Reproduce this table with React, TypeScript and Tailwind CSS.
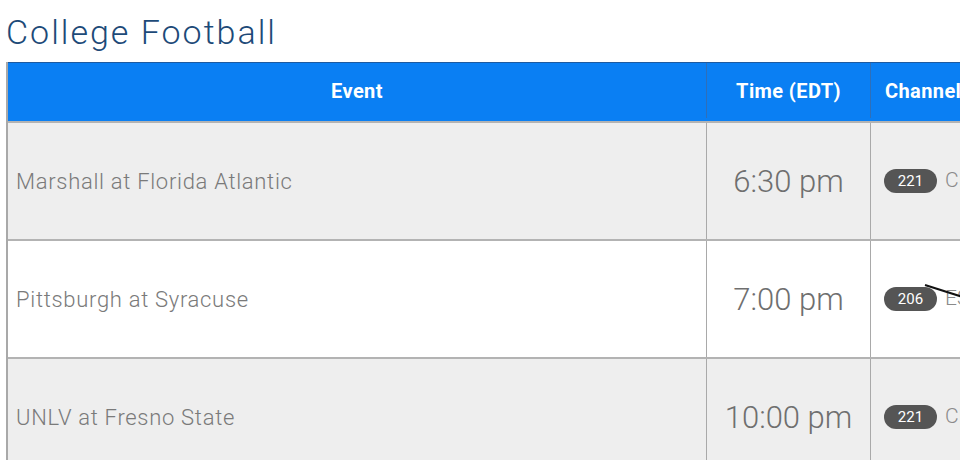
import React from 'react'

type Row = { event: string; time: string; channel: string; label: string; shade: boolean }

const rows: Row[] = [
  { event: 'Marshall at Florida Atlantic', time: '6:30 pm', channel: '221', label: 'CBSSN', shade: true },
  { event: 'Pittsburgh at Syracuse', time: '7:00 pm', channel: '206', label: 'ESPN', shade: false },
  { event: 'UNLV at Fresno State', time: '10:00 pm', channel: '221', label: 'CBSSN', shade: true },
]

const font = { fontFamily: 'Roboto, "Open Sans", sans-serif' }

export default function App() {
  return (
    <div className="w-[960px] h-[460px] overflow-hidden bg-white" style={font}>
      {/* ── Title ── */}
      <h1 className="h-[62px] pl-[6px] pt-[12px] text-[34px] leading-[40px] font-light tracking-[2px] text-[#1d4a78]">
        College Football
      </h1>

      {/* ── Schedule table ── */}
      <div className="w-[1120px] ml-[6px] border-l-2 border-[#a9a9a9]">
        {/* Header */}
        <div className="flex h-[59px] pb-[3px] bg-[#0a7ff3] border-t border-[#1d5aa0] text-white text-[20px] tracking-[0.4px] font-bold">
          <div className="w-[699px] flex items-center justify-center border-r border-[#2f6fb8]">Event</div>
          <div className="w-[164px] flex items-center justify-center border-r border-[#2f6fb8]">Time (EDT)</div>
          <div className="flex-1 flex items-center pl-[14px]">Channel</div>
        </div>

        {/* Rows */}
        {rows.map((r, i) => (
          <div
            key={i}
            className={`relative flex h-[118px] border-t-2 first:border-t-0 border-[#b3b3b3] ${r.shade ? 'bg-[#eeeeee]' : 'bg-white'}`}
          >
            <div className="w-[699px] flex items-center pl-[8px] text-[22px] font-light tracking-[0.7px] text-[#7a7a7a] border-r border-[#a9a9a9]">
              {r.event}
            </div>
            <div className="w-[164px] flex items-center justify-center pt-[2px] text-[31px] font-light text-[#6f6f6f] border-r border-[#a9a9a9]">
              {r.time}
            </div>
            <div className="flex-1 flex items-center pl-[13px] gap-[8px]">
              <span className="inline-flex items-center justify-center w-[53px] h-[24px] rounded-full bg-[#555555] text-white text-[15px] leading-none">
                {r.channel}
              </span>
              <span className="text-[21px] font-light text-[#8a8a8a]">{r.label}</span>
            </div>
            {i === 1 && (
              <svg className="absolute left-[916px] top-[42px]" width="50" height="20" viewBox="0 0 50 20">
                <path d="M1 2 L48 17" stroke="#111" strokeWidth="2" fill="none" />
              </svg>
            )}
          </div>
        ))}
      </div>
    </div>
  )
}
